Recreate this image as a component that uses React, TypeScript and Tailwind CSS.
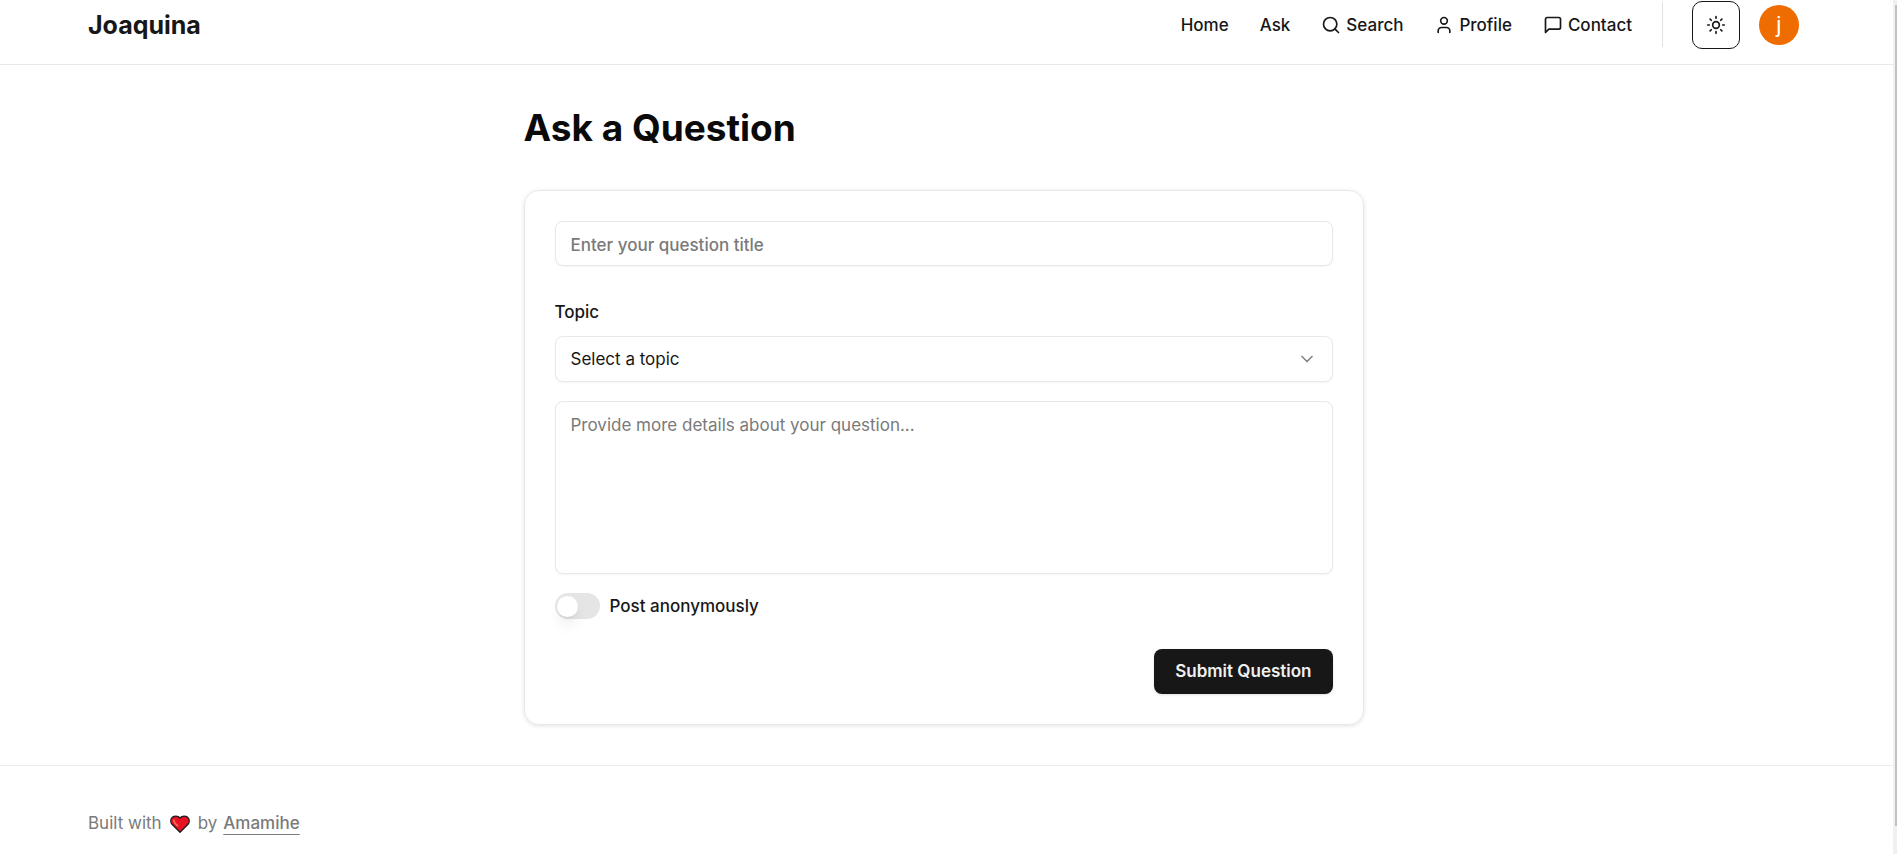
import type { ReactNode } from "react";
import { ChevronDown, Search, Sun, User } from "lucide-react";

function NavLink({ href, icon, children }: { href: string; icon?: ReactNode; children: ReactNode }) {
  return (
    <a href={href} className="flex items-center gap-[5px] font-medium">
      {icon}
      <span className="pt-0.5">{children}</span>
    </a>
  );
}

function MessageIcon() {
  return (
    <svg
      viewBox="0 0 24 24"
      className="size-5"
      fill="none"
      stroke="currentColor"
      strokeWidth="2"
      strokeLinecap="round"
      strokeLinejoin="round"
      aria-hidden="true"
    >
      <path d="M21 15a2 2 0 0 1-2 2H7l-4 4V5a2 2 0 0 1 2-2h14a2 2 0 0 1 2 2z" />
    </svg>
  );
}

function Heart() {
  return (
    <svg viewBox="0 0 20 18" className="mx-2 h-[18px] w-5 shrink-0" role="img" aria-label="love">
      <path
        d="M10 17.2 2 9.2C.5 7.600 0.400 4.800 1.600 3.100 3.400.500 7.800.300 10 3 12.200.300 16.600.500 18.400 3.100 19.600 4.800 19.500 7.600 18 9.200Z"
        fill="#e81224"
        stroke="#1c1c1c"
        strokeWidth="1.300"
        strokeLinejoin="round"
      />
      <path d="M3.800 5.200C4 7.500 5.400 8.800 7.600 10.600" fill="none" stroke="#f0704f" strokeWidth="1.700" strokeLinecap="round" />
    </svg>
  );
}

function Header() {
  return (
    <header className="border-b border-[#e8e8e8] pb-[15px] pl-[88px] pr-[94px]">
      <div className="flex h-[49px] items-center justify-between">
        <a href="#home" className="text-[25px] leading-[30px] font-bold">
          Joaquina
        </a>
        <div className="flex items-center">
          <nav className="flex items-center gap-[31px]">
            <NavLink href="#home">Home</NavLink>
            <NavLink href="#ask">Ask</NavLink>
            <NavLink href="#search" icon={<Search size={20} />}>Search</NavLink>
            <NavLink href="#profile" icon={<User size={20} />}>Profile</NavLink>
            <NavLink href="#contact" icon={<MessageIcon />}>Contact</NavLink>
          </nav>
          <div className="ml-[30px] h-[45px] w-px bg-[#e2e2e2]" />
          <button
            type="button"
            aria-label="Toggle theme"
            className="ml-[29px] flex size-12 items-center justify-center rounded-[10px] border border-[#171717]"
          >
            <Sun size={20} />
          </button>
          <button
            type="button"
            aria-label="Account"
            className="ml-[19px] flex size-10 items-center justify-center rounded-full bg-[#ef6c00] font-['Roboto',sans-serif] text-[22px] leading-none text-white"
          >
            j
          </button>
        </div>
      </div>
    </header>
  );
}

function QuestionForm() {
  return (
    <form
      onSubmit={(e) => e.preventDefault()}
      className="flex flex-col rounded-[15px] border border-[#e8e8e8] p-[30px] shadow-[0_1px_4px_rgba(0,0,0,0.12)]"
    >
      <input
        type="text"
        aria-label="Question title"
        placeholder="Enter your question title"
        className="h-[45px] rounded-lg border border-[#e8e8e8] px-[15px] pt-0.5 font-medium shadow-xs placeholder:text-[#7a7a7a]"
      />
      <label htmlFor="topic" className="mt-[34px] leading-[25px] font-medium">
        Topic
      </label>
      <div className="relative mt-[11px]">
        <select
          id="topic"
          className="h-[46px] w-full appearance-none rounded-lg border border-[#e8e8e8] bg-transparent px-[15px] pt-0.5 shadow-xs"
        >
          <option>Select a topic</option>
        </select>
        <ChevronDown size={20} className="pointer-events-none absolute top-[13px] right-4 text-[#858585]" />
      </div>
      <textarea
        aria-label="Question details"
        placeholder="Provide more details about your question..."
        className="mt-[19px] h-[173px] resize-none rounded-lg border border-[#e8e8e8] px-[15px] py-[11px] leading-[25px] shadow-xs placeholder:text-[#7a7a7a]"
      />
      <div className="mt-[19px] flex items-center gap-2.5">
        <input
          id="anonymous"
          type="checkbox"
          role="switch"
          className="flex h-[26px] w-[45px] appearance-none items-center rounded-full bg-[#e5e5e5] px-0.5 before:size-[21px] before:rounded-full before:bg-white before:shadow-lg checked:justify-end"
        />
        <label htmlFor="anonymous" className="leading-[26px] font-medium">
          Post anonymously
        </label>
      </div>
      <button
        type="submit"
        className="mt-[30px] h-[45px] self-end rounded-lg bg-[#171717] px-[21px] font-semibold text-[#f0f0f0] shadow-sm"
      >
        Submit Question
      </button>
    </form>
  );
}

export default function App() {
  return (
    <div className="flex min-h-screen bg-white font-['Inter',sans-serif] text-[17px] text-[#171717]">
      <div className="flex min-w-0 grow flex-col">
        <Header />
        <main className="pr-1.5">
          <div className="mx-auto w-full max-w-[840px] pt-10 pb-10">
            <h1 className="mb-[39px] text-[37px] leading-[46px] font-bold text-[#0a0a0a]">Ask a Question</h1>
            <QuestionForm />
          </div>
        </main>
        <footer className="border-t border-[#ebebeb] pt-[45px] pl-[88px] text-[#7a7a7a]">
          <p className="flex items-center leading-[25px]">
            Built with <Heart /> by
            <a href="#amamihe" className="ml-1.5 font-medium underline decoration-1 underline-offset-[5px]">
              Amamihe
            </a>
          </p>
        </footer>
      </div>
      <div className="w-1 shrink-0 bg-[#f0f0f0] pt-[5px] pb-7 pl-0.5" aria-hidden="true">
        <div className="h-full bg-[#c1c1c1]" />
      </div>
    </div>
  );
}
